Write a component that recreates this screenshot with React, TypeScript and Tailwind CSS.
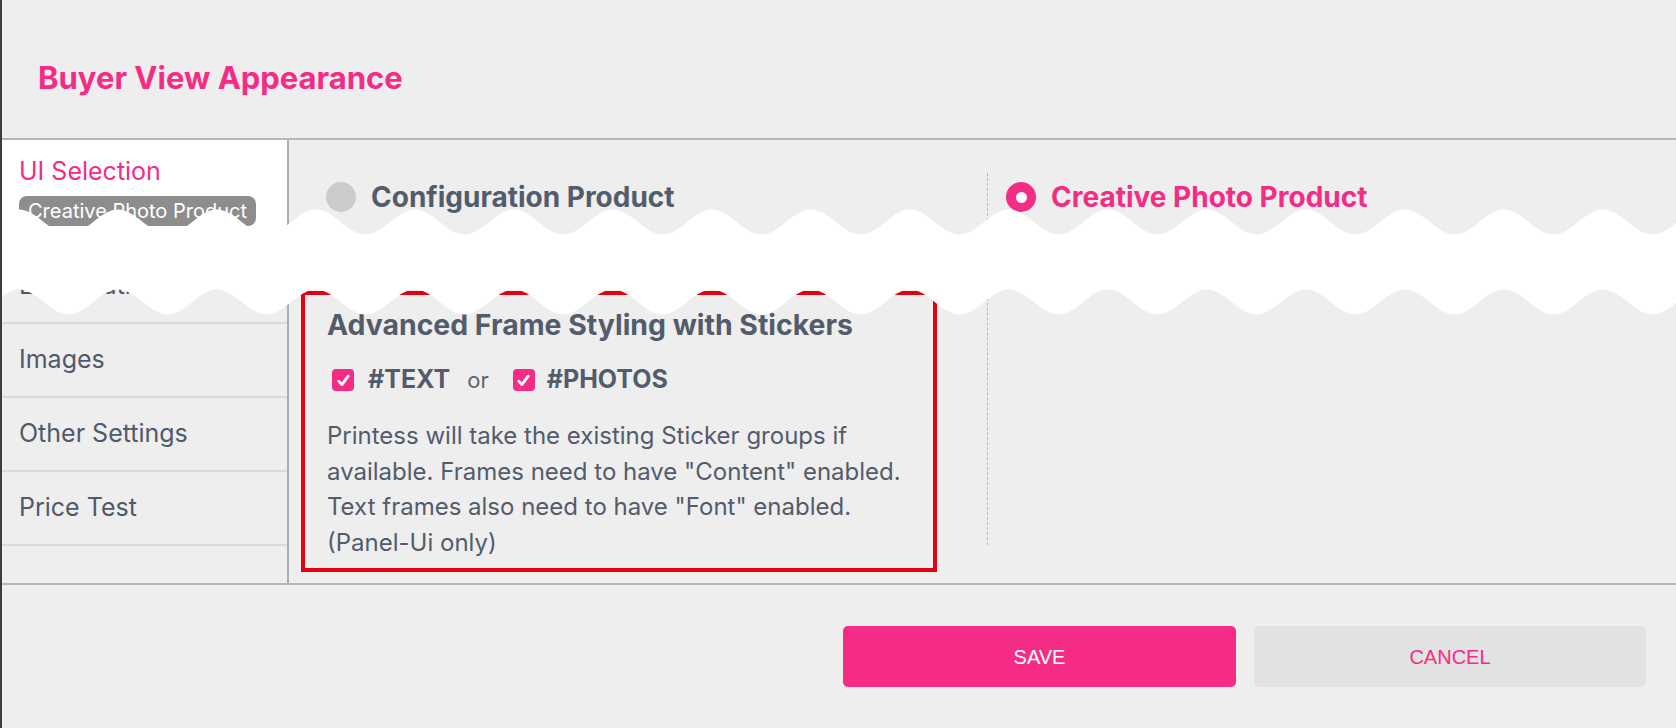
import React from 'react'

const PINK = '#f42c86'

function Radio({ checked }: { checked: boolean }) {
  if (checked) {
    return (
      <div className="w-[30px] h-[30px] rounded-full bg-[#f42c86] flex items-center justify-center flex-shrink-0">
        <div className="w-[11px] h-[11px] rounded-full bg-white" />
      </div>
    )
  }
  return <div className="w-[30px] h-[30px] rounded-full bg-[#cbcbcb] flex-shrink-0" />
}

function Checkbox() {
  return (
    <div className="w-[22px] h-[22px] rounded-[4px] bg-[#f42c86] flex items-center justify-center flex-shrink-0">
      <svg width="15" height="15" viewBox="0 0 14 14" fill="none">
        <path d="M2.6 7.6 L5.5 10.8 L11.4 2.9" stroke="#fff" strokeWidth="2.6" strokeLinecap="round" strokeLinejoin="round" />
      </svg>
    </div>
  )
}

// torn-paper band that hides part of the screenshot
function WaveBand() {
  const period = 99
  const phase = 19
  const amp = 12.5
  const mid = 22
  const gap = 80
  const top: string[] = []
  const bottom: string[] = []
  for (let x = -4; x <= 1684; x += 3) {
    const y = mid - amp * Math.cos((2 * Math.PI * (x - phase)) / period)
    top.push(`${x},${y.toFixed(2)}`)
    bottom.unshift(`${x},${(y + gap).toFixed(2)}`)
  }
  const d = `M${top.join(' L')} L${bottom.join(' L')} Z`
  return (
    <svg
      className="absolute top-[200px] left-[-2px] pointer-events-none"
      width="1680"
      height="125"
      viewBox="0 0 1680 125"
    >
      <path d={d} fill="#ffffff" />
    </svg>
  )
}

export default function App() {
  const rows = ['Localization', 'Images', 'Other Settings', 'Price Test']

  return (
    <div
      className="relative w-[1676px] h-[728px] overflow-hidden bg-[#eeeeee] border-l-2 border-[#3c3c3c]"
      style={{ fontFamily: 'Inter, "Noto Sans", sans-serif' }}
    >
      {/* Header */}
      <div className="h-[140px] border-b-2 border-[#b3b6bc] pl-[36px] pt-[59px]">
        <h1 className="text-[31px] leading-[38px] font-bold" style={{ color: PINK }}>
          Buyer View Appearance
        </h1>
      </div>

      {/* Body */}
      <div className="flex h-[445px] border-b-2 border-[#b3b6bc]">
        {/* Sidebar */}
        <div className="w-[287px] border-r-2 border-[#a9adb3] flex flex-col">
          <div className="bg-white pt-[16px] pb-[24px] pl-[17px]">
            <p className="text-[25px] leading-[30px] text-[#f42c86]">UI Selection</p>
            <span className="inline-block mt-[10px] h-[30px] px-[9px] rounded-[8px] bg-[#8d8d8d] text-white text-[20px] leading-[30px]">
              Creative Photo Product
            </span>
          </div>
          {rows.map(r => (
            <div
              key={r}
              className="h-[74px] border-b-2 border-[#d9d9d9] flex items-center pl-[17px] text-[25px] text-[#4f5a6a]"
            >
              {r}
            </div>
          ))}
        </div>

        {/* Main */}
        <div className="flex-1 flex">
          <div className="w-[698px] pl-[12px] pt-[42px]">
            <div className="h-[30px] flex items-center gap-[15px] pl-[25px]">
              <Radio checked={false} />
              <span className="text-[28px] font-bold text-[#525c6b]">Configuration Product</span>
            </div>

            <div className="mt-[79px] w-[636px] border-4 border-[#e3000f] pl-[22px] pt-[14px] pb-[8px]">
              <h2 className="text-[28.4px] leading-[32px] font-bold text-[#525c6b]">
                Advanced Frame Styling with Stickers
              </h2>
              <div className="mt-[21px] h-[36px] flex items-center pl-[5px]">
                <Checkbox />
                <span className="ml-[14px] text-[25px] font-bold text-[#525c6b]">#TEXT</span>
                <span className="ml-[17px] text-[22px] text-[#5b6573]">or</span>
                <span className="ml-[24px]"><Checkbox /></span>
                <span className="ml-[12px] text-[25px] font-bold text-[#525c6b]">#PHOTOS</span>
              </div>
              <p className="mt-[20px] text-[24px] leading-[35.5px] text-[#525c6b] whitespace-nowrap">
                Printess will take the existing Sticker groups if
                <br />
                available. Frames need to have "Content" enabled.
                <br />
                Text frames also need to have "Font" enabled.
                <br />
                (Panel-Ui only)
              </p>
            </div>
          </div>

          <div className="self-start mt-[33px] h-[372px] border-l border-dashed border-[#b9b9b9]" />

          <div className="pl-[18px] pt-[42px]">
            <div className="h-[30px] flex items-center gap-[15px]">
              <Radio checked />
              <span className="text-[28px] font-bold text-[#f42c86]">Creative Photo Product</span>
            </div>
          </div>
        </div>
      </div>

      {/* Footer */}
      <div
        className="flex justify-end gap-[18px] pt-[41px] pr-[30px]"
        style={{ fontFamily: '"Liberation Sans", Arial, sans-serif' }}
      >
        <button className="w-[393px] h-[61px] rounded-[5px] bg-[#f42c86] text-white text-[20px]">
          SAVE
        </button>
        <button className="w-[392px] h-[61px] rounded-[5px] bg-[#e2e2e2] text-[#f42c86] text-[20px]">
          CANCEL
        </button>
      </div>

      <WaveBand />
    </div>
  )
}
